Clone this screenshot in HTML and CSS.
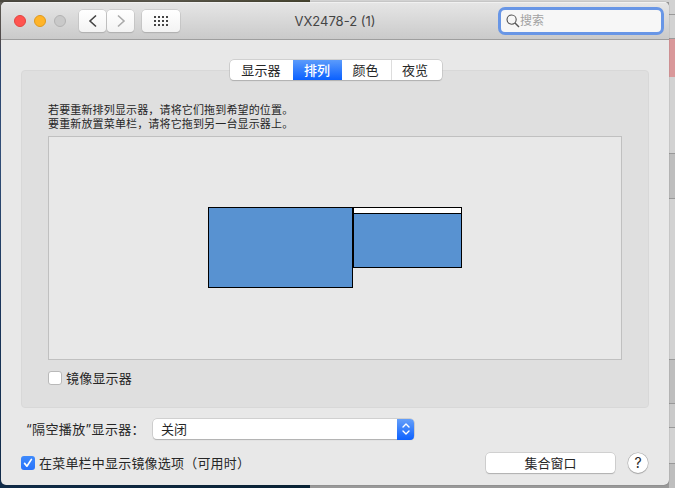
FILE: index.html
```html
<!DOCTYPE html>
<html lang="zh-CN">
<head>
<meta charset="utf-8">
<title>VX2478-2 (1)</title>
<link rel="stylesheet" href="styles.css">
</head>
<body>
<div class="desktop">
  <main class="window">
    <header class="toolbar">
      <div class="lights"><i class="light red"></i><i class="light yellow"></i><i class="light off"></i></div>
      <div class="nav">
        <button class="tool"><svg width="10" height="14" viewBox="0 0 10 14"><path d="M8 1.5 2 7l6 5.5" fill="none" stroke="#444" stroke-width="1.6"/></svg></button>
        <button class="tool"><svg width="10" height="14" viewBox="0 0 10 14"><path d="M2 1.5 8 7l-6 5.5" fill="none" stroke="#aaa" stroke-width="1.6"/></svg></button>
      </div>
      <button class="tool grid-tool"><svg width="14" height="10" viewBox="0 0 14 10"><path d="M0 1h14M0 5h14M0 9h14" stroke="#444" stroke-width="2" stroke-dasharray="2 2"/></svg></button>
      <h1 class="title">VX2478-2 (1)</h1>
      <div class="search"><svg width="14" height="14" viewBox="0 0 14 14"><circle cx="5.6" cy="5.6" r="4.6" fill="none" stroke="#555" stroke-width="1.1"/><path d="m9 9 4 4" stroke="#555" stroke-width="1.4"/></svg><span>搜索</span></div>
    </header>
    <section class="content">
      <nav class="tabs"><span class="tab t1">显示器</span><span class="tab t2">排列</span><span class="tab t3">颜色</span><span class="tab t4">夜览</span></nav>
      <div class="panel">
        <p class="hint">若要重新排列显示器，请将它们拖到希望的位置。<br>要重新放置菜单栏，请将它拖到另一台显示器上。</p>
        <div class="canvas">
          <div class="display large"></div>
          <div class="display small"><div class="menubar"></div></div>
        </div>
        <label class="option mirror"><span class="box"></span>镜像显示器</label>
      </div>
      <div class="airplay"><span class="airplay-label">“隔空播放”显示器：</span>
        <div class="select"><span>关闭</span><div class="stepper"><svg width="10" height="14" viewBox="0 0 10 14"><path d="m2 5 3-3 3 3M2 9l3 3 3-3" fill="none" stroke="#fff" stroke-width="1.4" stroke-linecap="round" stroke-linejoin="round"/></svg></div></div>
      </div>
      <footer class="footer">
        <label class="option"><span class="box checked"><svg width="14" height="14" viewBox="0 0 14 14"><path d="m3.6 7.4 2.3 2.8 4.5-6.8" fill="none" stroke="#fff" stroke-width="1.7" stroke-linecap="round" stroke-linejoin="round"/></svg></span>在菜单栏中显示镜像选项（可用时）</label>
        <button class="gather">集合窗口</button>
        <button class="help">?</button>
      </footer>
    </section>
  </main>
  <aside class="behind"><i class="b1"></i><i class="b2"></i><i class="b3"></i><i class="b4"></i><i class="b5"></i><i class="b6"></i><i class="b7"></i><i class="b8"></i><i class="b9"></i><i class="b10"></i></aside>
</div>
</body>
</html>
```
FILE: styles.css
```css
* { box-sizing: border-box; }
body {
  margin: 0;
  font: 13px/18px Inter, "Noto Sans CJK SC", sans-serif;
  color: #262626;
}
button { font: inherit; color: inherit; padding: 0; border: 0; }
svg { display: block; flex: none; }
.desktop {
  display: flex;
  width: 675px;
  height: 488px;
  padding: 2px 0 0 1px;
  overflow: hidden;
  background:
    linear-gradient(90deg, #4b4940, #5a574c 50%, #45432f) 0 0 / 310px 2px no-repeat,
    linear-gradient(90deg, #102c48, #0a2335) 0 485px / 310px 3px no-repeat,
    linear-gradient(#625f58, #554f50 40px, #2c4874 60px, #35547f 150px, #1d3a62 300px, #112d4d) 0 0 / 8px 488px no-repeat,
    linear-gradient(#d2d2d2 0 2px, #999 2px);
}
.window {
  width: 668px;
  height: 483px;
  border-radius: 5px;
  background: #e8e8e8;
  box-shadow: 0 0 1px rgba(0, 0, 0, .55);
  overflow: hidden;
  position: relative;
  z-index: 1;
}
.toolbar {
  display: flex;
  align-items: center;
  height: 38px;
  padding: 0 5px 0 13px;
  border-bottom: 1px solid #9e9e9e;
  background: linear-gradient(#e6e6e6, #cacaca);
  box-shadow: inset 0 1px #f1f1f1;
}
.lights { display: flex; gap: 8px; width: 64px; }
.light { width: 12px; height: 12px; border-radius: 50%; border: 1px solid; }
.red { background: #ff5450; border-color: #e2443f; }
.yellow { background: #ffb429; border-color: #df9a1c; }
.off { background: #c9c9c9; border-color: #b3b3b3; }
.nav { display: flex; gap: 1px; margin-left: 1px; }
.tool {
  display: flex;
  flex: none;
  align-items: center;
  justify-content: center;
  width: 27px;
  height: 22px;
  border-radius: 4px;
  background: linear-gradient(#fff, #f3f3f3);
  box-shadow: 0 0 0 .5px #bcbcbc, 0 1px 1px #a5a5a5;
}
.grid-tool { width: 38px; margin-left: 8px; }
.title {
  flex: 1;
  margin: 0;
  padding-right: 8px;
  text-align: center;
  font: 13px/18px Inter, sans-serif;
  color: #444;
}
.search {
  display: flex;
  flex: none;
  align-items: center;
  gap: 0;
  width: 166px;
  height: 28px;
  margin-left: auto;
  padding-left: 5px;
  border: 3px solid #6896e6;
  border-radius: 7px;
  background: #f7f7f7;
  font-size: 12px;
  color: #a2a2a2;
}
.content { padding: 20px 20px 0; }
.tabs {
  display: flex;
  width: 212px;
  height: 20px;
  margin: 0 auto -10px 208.5px;
  position: relative;
  border-radius: 4px;
  background: #fff;
  box-shadow: 0 0 0 .5px #b8b8b8, 0 1px 1px #aaa;
  letter-spacing: .1px;
}
.tab { display: flex; align-items: center; justify-content: center; }
.t1 { width: 63px; }
.t2 { width: 49px; color: #fff; font-weight: 500; background: linear-gradient(#5b9bfb, #0a60ff); }
.t3 { width: 50px; padding-right: 1px; border-right: 1px solid #ddd; }
.t4 { width: 50px; padding-right: 3px; }
.panel {
  height: 338px;
  padding: 32px 26px 0;
  border: 1px solid #d8d8d8;
  border-radius: 4px;
  background: #dfdfdf;
}
.hint { margin: 0; font-size: 11px; line-height: 14px; letter-spacing: .15px; height: 33px; }
.canvas {
  display: flex;
  align-items: flex-start;
  height: 224px;
  padding: 70px 0 0 159px;
  border: 1px solid #c0c0c0;
  background: #e8e8e8;
}
.display { border: 1px solid #000; background: #5892d1; }
.large { width: 145px; height: 81px; }
.small { width: 109px; height: 61px; }
.menubar { height: 6px; border-bottom: 1px solid #000; background: #fff; }
.option { display: flex; align-items: center; letter-spacing: .2px; }
.mirror { margin-top: 9px; }
.box {
  width: 14px;
  height: 14px;
  margin-right: 4px;
  border: 1px solid #b9b9b9;
  border-radius: 3px;
  background: #fff;
}
.box.checked { border: 0; background: linear-gradient(#3e8afc, #2872fa); }
.airplay { display: flex; align-items: center; height: 20px; margin-top: 11px; }
.airplay-label { width: 132px; padding-left: 5px; white-space: nowrap; letter-spacing: .35px; }
.select {
  display: flex;
  align-items: center;
  justify-content: space-between;
  width: 261px;
  height: 20px;
  padding-left: 8px;
  border-radius: 4px;
  background: #fff;
  box-shadow: 0 0 0 .5px #b8b8b8, 0 1px 1px #aaa;
}
.stepper {
  display: flex;
  align-items: center;
  justify-content: center;
  width: 17px;
  height: 21px;
  border-radius: 0 4px 4px 0;
  background: linear-gradient(#659ff9, #0d61ff);
}
.footer { display: flex; align-items: center; height: 20px; margin-top: 14px; }
.gather {
  width: 129px;
  height: 20px;
  margin-left: auto;
  border-radius: 4px;
  background: #fff;
  box-shadow: 0 0 0 .5px #b8b8b8, 0 1px 1px #aaa;
}
.help {
  width: 20px;
  height: 20px;
  margin: 0 1px 0 13px;
  border-radius: 50%;
  background: #fff;
  box-shadow: 0 0 0 .5px #aaa, 0 1px 1px #aaa;
  font-size: 14px;
  line-height: 20px;
}
.behind { width: 6px; box-shadow: inset 1px 0 #aaa; }
.behind i { display: block; border-bottom: 1px solid #999; background: #d2d2d2; }
.behind .b1 { height: 13px; }
.behind .b2 { height: 24px; }
.behind .b3 { height: 38px; background: #d9989a; border: 0; }
.behind .b4 { height: 77px; }
.behind .b5 { height: 45px; background: #bebebe; }
.behind .b6 { height: 161px; }
.behind .b7 { height: 44px; background: #bebebe; }
.behind .b8 { height: 24px; background: #cacaca; }
.behind .b9 { height: 36px; }
.behind .b10 { height: 24px; background: #bebebe; border: 0; }
```
